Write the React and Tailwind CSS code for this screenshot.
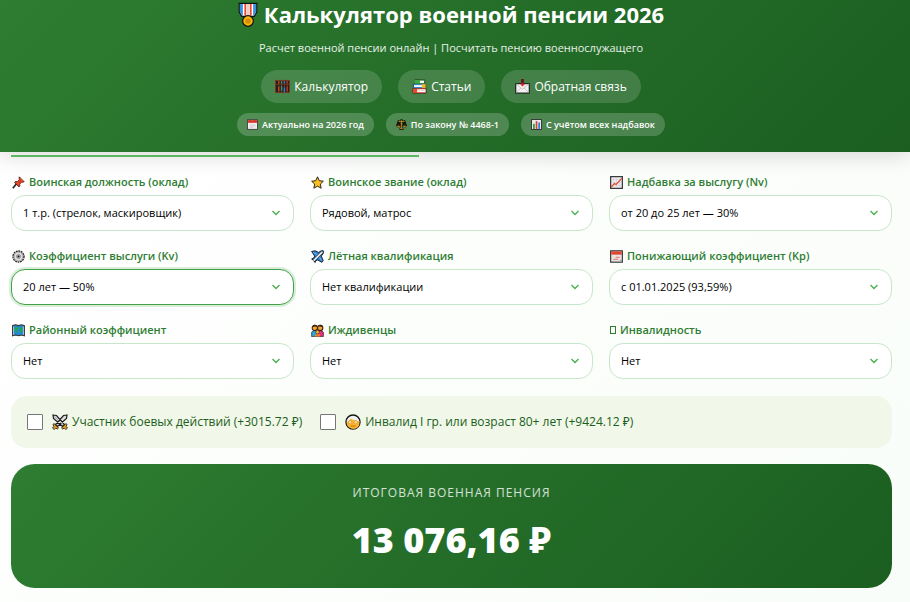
import { useState } from 'react';

const ICONS = {
  medal: (
    <>
      <path d="M1 .7h14v7l-2 3.300H3L1 7.700z" fill="#fff" stroke="#111" strokeWidth="1" />
      <path d="M1.500 1.200h2.400v9.300H3.300L1.500 7.500zM12.100 1.200h2.400v6.300l-1.800 3h-.6z" fill="#3b8fe0" />
      <path d="M5.100 1.200h1.500v9.400H5.100zM9.400 1.200h1.500v9.400H9.400z" fill="#e8492f" />
      <path d="M7.500 1.200h1v9.400h-1z" fill="#f3a898" />
      <circle cx="8" cy="14.800" r="4.300" fill="#f9b80e" stroke="#111" strokeWidth="1" />
      <circle cx="8" cy="14.800" r="2.200" fill="#d98a06" />
    </>
  ),
  abacus: (
    <>
      <rect x=".5" y="1.500" width="15" height="13" fill="#2b1a17" stroke="#7a3b22" />
      <path d="M4 2v12M7 2v12M10 2v12M13 2v12" stroke="#9c5a3c" strokeWidth=".6" />
      <path d="M1 5.500h14" stroke="#7a3b22" strokeWidth="1" />
      <path d="M4 8v5M4 2.500v2" stroke="#c0402c" strokeWidth="1.600" />
      <path d="M7 7.500v5M7 2.500v2" stroke="#2a9a68" strokeWidth="1.600" />
      <path d="M10 9v5M10 2.500v2" stroke="#2f7bc4" strokeWidth="1.600" />
      <path d="M13 8v5M13 2.500v2" stroke="#a63c2c" strokeWidth="1.600" />
    </>
  ),
  books: (
    <>
      <path d="M3 1h10.500v4H3zM1.500 5.500h13v4h-13zM1 10h14v5H1z" fill="#fff" stroke="#111" strokeWidth=".8" />
      <path d="M2.500 1h6v4h-6z" fill="#3aaa42" />
      <path d="M8.500 1.300h5M8.500 4.700h5" stroke="#3aaa42" strokeWidth=".8" />
      <path d="M1.500 6h13M1.500 9h13" stroke="#2684dc" strokeWidth="1" />
      <path d="M10.500 5.500h4v4h-4z" fill="#f3b51b" />
      <path d="M1 10.200h4.500V15H1z" fill="#e8482d" />
      <path d="M5 10.500h10M5 14.600h10" stroke="#e8482d" strokeWidth=".9" />
      <path d="M6 12.500h9" stroke="#bbb" strokeWidth=".6" />
    </>
  ),
  mailbox: (
    <>
      <rect x=".8" y="5" width="14.400" height="10" fill="#f4f1f2" stroke="#111" strokeWidth="1.100" />
      <path d="M1.500 5.500L8 11l6.500-5.500M1.500 14.500l4.800-5M14.500 14.500l-4.800-5" fill="none" stroke="#b9b5b8" strokeWidth=".8" />
      <path d="M6.800 0h2.400v5.500h1.300L8 8 5.500 5.500h1.300z" fill="#d92532" />
      <path d="M6.500 0h3v4.500h-3z" fill="#5e1a20" />
    </>
  ),
  calendar: (
    <>
      <rect x=".7" y="1" width="14.600" height="14" fill="#f1eff0" stroke="#333" strokeWidth="1.200" />
      <path d="M1.300 1.600h13.400v4H1.300z" fill="#dd3b2c" />
      <path d="M4 8.500h8M4 10.500h8M4 12.500h5" stroke="#c9c4c8" strokeWidth="1" />
      <path d="M4 3h1.500M10.500 3H12" stroke="#7b1d18" strokeWidth="1" />
    </>
  ),
  calendarTear: (
    <>
      <rect x=".8" y="1" width="14.400" height="14" fill="#e7e4e6" stroke="#333" strokeWidth="1.400" />
      <path d="M1.500 1.700h13v4h-13z" fill="#e2452f" />
      <path d="M7 9h5M4 11.500h6" stroke="#ef8a78" strokeWidth="1.500" />
      <path d="M11 14.300l3.500-3.500v3.500z" fill="#aaa" />
    </>
  ),
  scales: (
    <>
      <path d="M8 1v13M2.500 3.500h11M5 14.500h6M6.500 2h3" stroke="#111" strokeWidth="3" />
      <path d="M3.500 3.500l-2.500 6h5zM12.500 3.500l-2.500 6h5z" fill="#3a3010" stroke="#111" strokeWidth="1.800" />
      <path d="M.5 9.500h6c0 3-6 3-6 0zM9.500 9.500h6c0 3-6 3-6 0z" fill="#f0b323" stroke="#111" strokeWidth=".8" />
      <path d="M8 2v11.500M3.500 3.500h9M5.500 14h5" stroke="#e6a51b" strokeWidth="1.100" />
    </>
  ),
  bars: (
    <>
      <rect x=".8" y=".8" width="14.400" height="14.400" fill="#f2f2f4" stroke="#333" strokeWidth="1.400" />
      <path d="M2 4.500h12M2 8h12M2 11.500h12" stroke="#c9c9cf" strokeWidth=".6" />
      <path d="M3 7h2.500v7.500H3z" fill="#25a541" />
      <path d="M6.800 3h2.500v11.500H6.800z" fill="#e2402b" />
      <path d="M10.600 5h2.500v9.500h-2.500z" fill="#2583dc" />
    </>
  ),
  pin: (
    <>
      <path d="M1 15l5-6" stroke="#222" strokeWidth="2" />
      <path d="M9 1l6 6-1.500.8-1.800-.3-2.200 2.600.2 2.400-1.200 1L3.200 8l1-1.200 2.600.1L9 4.500l-.4-2z" fill="#e63b1e" stroke="#3b1712" strokeWidth=".9" />
      <path d="M9.500 2.500l4 4M6 8l2.500 2.500" stroke="#ff7650" strokeWidth=".8" />
    </>
  ),
  star: (
    <path d="M8 1l2.200 4.800 5 .6-3.700 3.500 1 5.100L8 12.500 3.500 15l1-5.100L.8 6.400l5-.6z" fill="#fbbd22" stroke="#2b220f" strokeWidth="1.200" />
  ),
  trend: (
    <>
      <rect x=".8" y=".8" width="14.400" height="14.400" fill="#eeedf0" stroke="#333" strokeWidth="1.500" />
      <path d="M4.500 1.500v13M8 1.500v13M11.500 1.500v13M1.500 4.500h13M1.500 8h13M1.500 11.500h13" stroke="#cbc9ce" strokeWidth=".6" />
      <path d="M1.500 13.500l4-4.200 2 1.200L14.500 3" fill="none" stroke="#e5482f" strokeWidth="1.500" />
    </>
  ),
  gear: (
    <>
      <circle cx="8" cy="8" r="6.800" fill="#d8d6d8" stroke="#222" strokeWidth="1.600" strokeDasharray="2.200 .9" />
      <circle cx="8" cy="8" r="5" fill="#e6e4e6" stroke="#8c898c" strokeWidth=".7" />
      <circle cx="8" cy="8" r="2.600" fill="#bdbabd" stroke="#777" strokeWidth=".8" />
      <circle cx="8" cy="8" r="1.200" fill="#111" />
    </>
  ),
  plane: (
    <>
      <path d="M.8 1.800l4.500-.8 4 2L12.500 1h2.700v3l-2.500 3.500L15 13l-1.500 2.200-5.500-3-2.500 1.500-.5 1.800L3.500 13 .8 11l2.400-.8 1.300-2.700z" fill="#2f7fd0" stroke="#172331" strokeWidth="1.200" />
      <path d="M3 13.300L14 2.200" stroke="#172331" strokeWidth="3.400" />
      <path d="M3.300 13L14 2.200" stroke="#edf1f5" strokeWidth="2.100" />
      <path d="M2.500 3l5 2.500M10.500 9l2.500 4" stroke="#8fc3f2" strokeWidth="1" />
    </>
  ),
  map: (
    <>
      <path d="M.8 2l3.500-1 3.700 1 3.700-1 3.500 1v12.500l-3.500-1-3.700 1-3.700-1-3.500 1z" fill="#2488d8" stroke="#333" strokeWidth="1.400" />
      <path d="M3.500 4l3.500-.5 1 2.500-2 2.500.5 3-2-1.500L3 7zM9.500 4.500l3.500-1v5l-2 3-1.500-3z" fill="#22a455" />
      <path d="M2 3v10.500M14 3v10.500" stroke="#e9eef2" strokeWidth=".8" />
    </>
  ),
  family: (
    <>
      <path d="M.8 15.500V10l3-2h3l1 2V15.500z" fill="#23a8df" stroke="#1b1514" strokeWidth=".8" />
      <path d="M15.200 15.500V10l-3-2h-3l-1 2v5.500z" fill="#e0307e" stroke="#1b1514" strokeWidth=".8" />
      <circle cx="4.700" cy="4.800" r="3.300" fill="#f4a52a" stroke="#3b2217" strokeWidth="1.300" />
      <circle cx="11.300" cy="4.800" r="3.300" fill="#f4a52a" stroke="#3b2217" strokeWidth="1.300" />
      <path d="M1.500 4c.5-4 5.500-4 6.300-.5C6 2.800 4 3 1.500 4zM14.500 4c-.5-4-5.500-4-6.300-.5 1.800-.7 3.800-.5 6.300.5z" fill="#3b2217" />
      <path d="M5 15.500V13l3-1.500 3 1.500v2.500z" fill="#f47b20" />
      <circle cx="8" cy="10" r="2.200" fill="#fbb93a" stroke="#3b2217" strokeWidth=".8" />
    </>
  ),
  swords: (
    <>
      <path d="M1 1l3.500.5 8 9-2 2-9-8zM15 1l-3.500.5-8 9 2 2 9-8z" fill="#dcdcdf" stroke="#1c1c1c" strokeWidth="1.200" />
      <path d="M2.500 2.500l8 8" stroke="#8b8b90" strokeWidth=".7" />
      <path d="M2 9.500l4.500 4.500-1.200 1-1.500-1-1.600 1.500L.5 14l1.500-1.800-1-1.500zM14 9.500L9.500 14l1.200 1 1.500-1 1.600 1.500 1.700-1.500-1.500-1.800 1-1.500z" fill="#f2a91d" stroke="#1c1c1c" strokeWidth=".9" />
    </>
  ),
  elder: (
    <>
      <circle cx="8" cy="8" r="7" fill="#f2f0f0" stroke="#161616" strokeWidth="1.400" />
      <path d="M1.600 8C3.500 7.500 5 6 5.800 4.500c2 1.500 5 2.500 8.600 2.700v2c0 7.600-12.800 7.600-12.800-1.200z" fill="#fbb62c" />
      <circle cx="5.200" cy="8.200" r="1.700" fill="#fde0a0" stroke="#c98420" strokeWidth=".6" />
      <circle cx="10.800" cy="8.200" r="1.700" fill="#fde0a0" stroke="#c98420" strokeWidth=".6" />
      <path d="M5.500 12h5" fill="none" stroke="#b3641a" strokeWidth=".9" />
    </>
  ),
};

function Icon({ name, className, viewBox = '0 0 16 16' }) {
  return (
    <svg viewBox={viewBox} className={`shrink-0 ${className}`} aria-hidden="true">
      {ICONS[name]}
    </svg>
  );
}

const NAV = [
  { icon: 'abacus', text: 'Калькулятор' },
  { icon: 'books', text: 'Статьи' },
  { icon: 'mailbox', text: 'Обратная связь' },
];

const BADGES = [
  { icon: 'calendar', text: 'Актуально на 2026 год' },
  { icon: 'scales', text: 'По закону № 4468-1' },
  { icon: 'bars', text: 'С учётом всех надбавок' },
];

const FIELDS = [
  { id: 'position', icon: 'pin', label: 'Воинская должность (оклад)', value: '1 т.р. (стрелок, маскировщик)' },
  { id: 'rank', icon: 'star', label: 'Воинское звание (оклад)', value: 'Рядовой, матрос' },
  { id: 'nv', icon: 'trend', label: 'Надбавка за выслугу (Nv)', value: 'от 20 до 25 лет — 30%' },
  { id: 'kv', icon: 'gear', label: 'Коэффициент выслуги (Kv)', value: '20 лет — 50%' },
  { id: 'flight', icon: 'plane', label: 'Лётная квалификация', value: 'Нет квалификации' },
  { id: 'kp', icon: 'calendarTear', label: 'Понижающий коэффициент (Kp)', value: 'с 01.01.2025 (93,59%)' },
  { id: 'region', icon: 'map', label: 'Районный коэффициент', value: 'Нет' },
  { id: 'dependents', icon: 'family', label: 'Иждивенцы', value: 'Нет' },
  { id: 'disability', icon: null, label: 'Инвалидность', value: 'Нет' },
];

const EXTRAS = [
  { id: 'combat', icon: 'swords', label: 'Участник боевых действий (+3015.72 ₽)' },
  { id: 'elder', icon: 'elder', label: 'Инвалид I гр. или возраст 80+ лет (+9424.12 ₽)' },
];

function SelectField({ field, active, onFocus }) {
  return (
    <div className="flex min-w-0 flex-col gap-1">
      <label htmlFor={field.id} className="flex items-center gap-1 pl-px text-[11px] leading-[18px] font-semibold whitespace-nowrap text-[#2e7d32]">
        {field.icon ? (
          <Icon name={field.icon} className="size-[13px]" />
        ) : (
          <span className="h-2 w-[6px] border border-[#2e7d32]" />
        )}
        {field.label}
      </label>
      <div className="relative">
        <select
          id={field.id}
          onFocus={onFocus}
          className={`block h-9 w-full appearance-none rounded-[14px] border bg-white pr-8 pl-[11px] text-[11px] text-black outline-none ${
            active ? 'border-[#43a047] ring-2 ring-[#4caf50]/20' : 'border-[#c8e6c9]'
          }`}
        >
          <option>{field.value}</option>
        </select>
        <svg viewBox="0 0 10 6" className="pointer-events-none absolute top-[15px] right-[13px] h-[6px] w-[10px]" aria-hidden="true">
          <path d="M1.500 1L5 4.500 8.500 1" fill="none" stroke="#4caf50" strokeWidth="1.400" />
        </svg>
      </div>
    </div>
  );
}

function App() {
  const [active, setActive] = useState('kv');
  const [checked, setChecked] = useState({});

  const toggle = (id) => setChecked({ ...checked, [id]: !checked[id] });

  return (
    <div className="min-h-screen bg-linear-135 from-white to-[#f9fdf9] font-['Open_Sans','Noto_Sans',sans-serif]">
      <header className="relative flex flex-col items-center bg-linear-135 from-[#2e7d32] to-[#1b5e20] pr-2 pb-4 text-white shadow-[0_4px_20px_rgba(0,0,0,0.15)]">
        <h1 className="flex items-center gap-1.5 text-[22px] leading-[29px] font-bold">
          <Icon name="medal" viewBox="0 0 16 20" className="h-[26px] w-[20px]" />
          Калькулятор военной пенсии 2026
        </h1>
        <p className="mt-[9px] text-[11px] leading-5 text-white/90">
          Расчет военной пенсии онлайн | Посчитать пенсию военнослужащего
        </p>
        <nav className="mt-3 flex gap-4">
          {NAV.map((item) => (
            <a key={item.text} href="#" className="flex h-[33px] items-center gap-1 rounded-full bg-white/15 px-3.5 text-xs font-medium">
              <Icon name={item.icon} className="size-[15px]" />
              {item.text}
            </a>
          ))}
        </nav>
        <div className="mt-2.5 flex gap-3">
          {BADGES.map((item) => (
            <span key={item.text} className="flex h-[23px] items-center gap-1 rounded-full bg-white/20 px-2.5 text-[9px] font-semibold">
              <Icon name={item.icon} className="size-[11px]" />
              {item.text}
            </span>
          ))}
        </div>
      </header>

      <main className="pt-[3px] pr-[18px] pb-3.5 pl-[11px]">
        <div className="relative h-0.5 w-[46.3%] bg-[#5cb860]" />

        <form className="mt-4 grid grid-cols-3 gap-4">
          {FIELDS.map((field) => (
            <SelectField key={field.id} field={field} active={active === field.id} onFocus={() => setActive(field.id)} />
          ))}
        </form>

        <div className="mt-[17px] flex min-h-[52px] items-center gap-[18px] rounded-2xl bg-[#f1f8e9] px-4">
          {EXTRAS.map((item) => (
            <label key={item.id} className="flex items-center gap-2 text-xs whitespace-nowrap text-[#1b5e20]">
              <input
                type="checkbox"
                checked={!!checked[item.id]}
                onChange={() => toggle(item.id)}
                className="size-4 appearance-none rounded-[1px] border border-[#767676] bg-white checked:bg-[#2e7d32]"
              />
              <span className="flex items-center gap-1 pl-px">
                <Icon name={item.icon} className="size-4" />
                {item.label}
              </span>
            </label>
          ))}
        </div>

        <section className="mt-4 flex flex-col items-center rounded-3xl bg-linear-135 from-[#2e7d32] to-[#1b5e20] pt-5 pb-5 text-white">
          <h2 className="text-xs leading-[18px] font-medium tracking-[1px] text-white/80 uppercase">Итоговая военная пенсия</h2>
          <p className="mt-2.5 text-[36px] leading-[56px] font-extrabold">13 076,16 ₽</p>
        </section>
      </main>
    </div>
  );
}

export default App;
